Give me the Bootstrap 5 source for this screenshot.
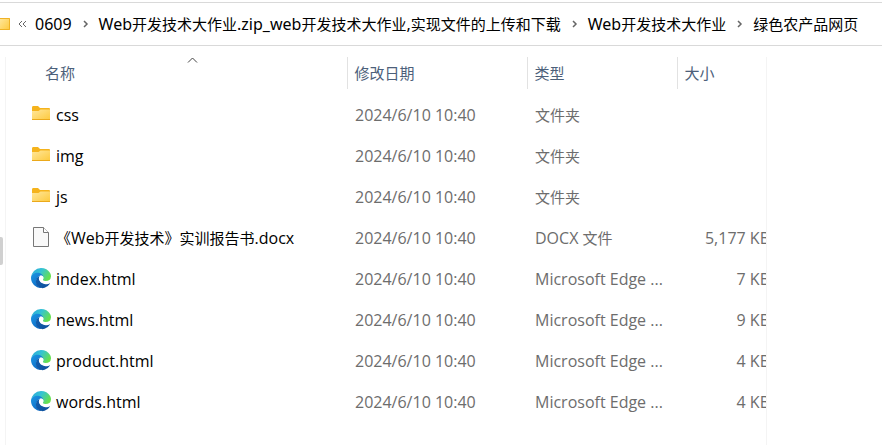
<!DOCTYPE html>
<html lang="zh-CN">
<head>
<meta charset="utf-8">
<meta name="viewport" content="width=device-width, initial-scale=1">
<title>绿色农产品网页</title>
<link href="https://cdn.jsdelivr.net/npm/bootstrap@5.3.0/dist/css/bootstrap.min.css" rel="stylesheet">
<style>
  body { font-family: "Noto Sans", "Noto Sans CJK SC", sans-serif; font-size: 16px; line-height: 24px; color: #000; background: #fff; }
  /* Chinese glyphs run one pixel smaller than the Latin ones */
  .zh { font-size: 15px; }
  a { color: inherit; text-decoration: none; }
  .address { margin-top: 2px; height: 44px; border-top: 1px solid #d9d9d9; border-bottom: 1px solid #d9d9d9; }
  .address a { white-space: nowrap; }
  .crumb-gap { width: 27px; }
  .pane { margin: 11px 115px 0 5px; min-height: calc(100vh - 57px); border-left: 1px solid #f4f4f4; border-right: 1px solid #f4f4f4; overflow: hidden; }
  .files { table-layout: fixed; border-collapse: collapse; }
  .files th { height: 32px; padding: 0 7px; font-weight: 400; color: #4c607a; border-right: 1px solid #e2e2e2; }
  .files th:first-child { padding-left: 39px; }
  .files th:last-child { border-right: 0; }
  .files td { height: 41px; padding: 0 8px; color: #6d6d6d; font-family: "Open Sans", "Noto Sans CJK SC", sans-serif; white-space: nowrap; overflow: hidden; }
  .files td:first-child { padding-left: 25px; }
  .files td:last-child { padding-right: 0; }
  .files td a { color: #000; }
  .spacer td { height: 5px !important; }
  .col-date { width: 180px; }
  .col-type { width: 150px; }
  .col-size { width: 89px; }
  .file-icon { width: 20px; height: 22px; margin: 0 5px 2px 0; }
  .over-edge { margin-right: -4px; }
  .sort-mark { left: 187px; top: 57px; }
  .thumb { left: 0; top: 237px; width: 3px; height: 28px; background: #d0d0d0; border-radius: 0 2px 2px 0; }
</style>
<script src="https://cdn.jsdelivr.net/npm/bootstrap@5.3.0/dist/js/bootstrap.bundle.min.js"></script>
</head>
<body class="overflow-hidden">
<svg width="0" height="0" class="position-absolute" aria-hidden="true">
  <defs>
    <linearGradient id="fold" x1="0" y1="0" x2="1" y2="1"><stop offset="0" stop-color="#ffe79c"/><stop offset="1" stop-color="#fdc93c"/></linearGradient>
    <linearGradient id="edgeTop" x1="0" y1="0" x2="1" y2=".5"><stop offset="0" stop-color="#2aa5dc"/><stop offset=".5" stop-color="#35c3d4"/><stop offset="1" stop-color="#66e04f"/></linearGradient>
    <linearGradient id="edgeLeft" x1="0" y1=".2" x2=".6" y2="1"><stop offset="0" stop-color="#1b93e0"/><stop offset="1" stop-color="#0c68c4"/></linearGradient>
    <linearGradient id="edgeLow" x1="0" y1="0" x2="1" y2="1"><stop offset="0" stop-color="#135fae"/><stop offset="1" stop-color="#0c4f9c"/></linearGradient>
    <symbol id="folder" viewBox="0 0 20 22">
      <path d="M1 4.500Q1 3 2 3H7L9 5H18Q19 5 19 6V10H1z" fill="#f5b31c"/>
      <path d="M1 8H7.500L9.500 6.500H19V17H1z" fill="url(#fold)"/>
      <path d="M1 16.500H19" stroke="#eba91b"/>
    </symbol>
    <symbol id="page" viewBox="0 0 20 22">
      <path d="M2.500 1.500H12.500L17.500 6.500V20.500H2.500z" fill="#f9f9f9" stroke="#777"/>
      <path d="M12.500 1.500V6.500H17.500" fill="#fff" stroke="#777"/>
    </symbol>
    <symbol id="edge" viewBox="0 0 256 256">
      <path d="M105.700 241.400a79.200 79.200 0 0 1-22.700-21.300 80.700 80.700 0 0 1 29.500-120c3.200-1.500 8.500-4.100 15.600-4a32.400 32.400 0 0 1 25.700 13 31.900 31.900 0 0 1 6.300 18.700c0-.2 24.500-79.600-80-79.600-43.900 0-80 41.700-80 78.200a130.200 130.200 0 0 0 12.100 56 128 128 0 0 0 156.400 67 75.500 75.500 0 0 1-62.800-8z" fill="url(#edgeLeft)"/>
      <path d="M235.700 195.500a93.700 93.700 0 0 1-10.600 4.700 101.900 101.900 0 0 1-35.900 6.400c-47.300 0-88.500-32.500-88.500-74.300a31.500 31.500 0 0 1 16.400-27.300c-42.800 1.800-53.800 46.400-53.800 72.500 0 74 68.100 81.400 82.800 81.400 7.900 0 19.800-2.300 27-4.600l1.300-.4a128.300 128.300 0 0 0 66.600-52.800 4 4 0 0 0-5.300-5.600z" fill="url(#edgeLow)"/>
      <path d="M152.300 148.900c-.8 1-3.300 2.500-3.300 5.600 0 2.600 1.700 5.100 4.700 7.200 14.400 10 41.500 8.700 41.600 8.700a59.600 59.600 0 0 0 30.300-8.400 61.400 61.400 0 0 0 30.400-52.900c.3-22.400-8-37.300-11.300-43.900C223.500 23.900 177.700 0 128 0A128 128 0 0 0 0 126.200c.5-36.500 36.800-66 80-66 3.500 0 23.500.3 42 10 16.300 8.600 24.900 18.900 30.800 29.200 6.200 10.700 7.300 24.200 7.300 29.600s-2.700 13.300-7.800 19.900z" fill="url(#edgeTop)"/>
      <path d="M108 116C118 94 152 94 158 120C160 134 146 146 152 156C166 170 206 170 244 152L238 194C192 214 128 194 108 154C102 138 103 126 108 116z" fill="#fff"/>
    </symbol>
    <symbol id="chevron" viewBox="0 0 27 12"><path d="M12 3L15 6L12 9" fill="none" stroke="#666" stroke-width="1.500"/></symbol>
  </defs>
</svg>

<nav class="address d-flex align-items-center" aria-label="路径">
  <svg class="flex-shrink-0" width="10" height="12" viewBox="0 0 10 12" aria-hidden="true"><path d="M0 0H10V12H0z" fill="url(#fold)"/><path d="M0 .5H9.500V11.500H0" fill="none" stroke="#efb226"/></svg>
  <svg class="flex-shrink-0 ms-2 me-2" width="9" height="8" viewBox="0 0 9 8" aria-hidden="true"><path d="M4 1L1 4L4 7M8 1L5 4L8 7" fill="none" stroke="#666"/></svg>
  <a href="#">0609</a>
  <svg class="crumb-gap flex-shrink-0" height="12" aria-hidden="true"><use href="#chevron"/></svg>
  <a href="#">Web<span class="zh">开发技术大作业</span>.zip_web<span class="zh">开发技术大作业</span>,<span class="zh">实现文件的上传和下载</span></a>
  <svg class="crumb-gap flex-shrink-0" height="12" aria-hidden="true"><use href="#chevron"/></svg>
  <a href="#">Web<span class="zh">开发技术大作业</span></a>
  <svg class="crumb-gap flex-shrink-0" height="12" aria-hidden="true"><use href="#chevron"/></svg>
  <a href="#"><span class="zh">绿色农产品网页</span></a>
</nav>

<main class="pane">
  <table class="files w-100">
    <colgroup><col><col class="col-date"><col class="col-type"><col class="col-size"></colgroup>
    <thead>
      <tr class="zh"><th scope="col" aria-sort="ascending">名称</th><th scope="col">修改日期</th><th scope="col">类型</th><th scope="col">大小</th></tr>
    </thead>
    <tbody>
      <tr class="spacer" aria-hidden="true"><td colspan="4"></td></tr>
      <tr><td><a href="#" class="d-flex align-items-center"><svg class="file-icon"><use href="#folder"/></svg>css</a></td><td>2024/6/10 10:40</td><td class="zh">文件夹</td><td></td></tr>
      <tr><td><a href="#" class="d-flex align-items-center"><svg class="file-icon"><use href="#folder"/></svg>img</a></td><td>2024/6/10 10:40</td><td class="zh">文件夹</td><td></td></tr>
      <tr><td><a href="#" class="d-flex align-items-center"><svg class="file-icon"><use href="#folder"/></svg>js</a></td><td>2024/6/10 10:40</td><td class="zh">文件夹</td><td></td></tr>
      <tr><td><a href="#" class="d-flex align-items-center"><svg class="file-icon"><use href="#page"/></svg><span><span class="zh">《</span>Web<span class="zh">开发技术》实训报告书</span>.docx</span></a></td><td>2024/6/10 10:40</td><td>DOCX <span class="zh">文件</span></td><td><div class="over-edge text-end">5,177 KB</div></td></tr>
      <tr><td><a href="#" class="d-flex align-items-center"><svg class="file-icon"><use href="#edge"/></svg>index.html</a></td><td>2024/6/10 10:40</td><td>Microsoft Edge ...</td><td><div class="over-edge text-end">7 KB</div></td></tr>
      <tr><td><a href="#" class="d-flex align-items-center"><svg class="file-icon"><use href="#edge"/></svg>news.html</a></td><td>2024/6/10 10:40</td><td>Microsoft Edge ...</td><td><div class="over-edge text-end">9 KB</div></td></tr>
      <tr><td><a href="#" class="d-flex align-items-center"><svg class="file-icon"><use href="#edge"/></svg>product.html</a></td><td>2024/6/10 10:40</td><td>Microsoft Edge ...</td><td><div class="over-edge text-end">4 KB</div></td></tr>
      <tr><td><a href="#" class="d-flex align-items-center"><svg class="file-icon"><use href="#edge"/></svg>words.html</a></td><td>2024/6/10 10:40</td><td>Microsoft Edge ...</td><td><div class="over-edge text-end">4 KB</div></td></tr>
    </tbody>
  </table>
</main>
<svg class="sort-mark position-absolute" width="11" height="7" viewBox="0 0 11 7" aria-hidden="true"><path d="M1 5.500L5.500 1L10 5.500" fill="none" stroke="#444"/></svg>
<div class="thumb position-absolute"></div>
</body>
</html>
